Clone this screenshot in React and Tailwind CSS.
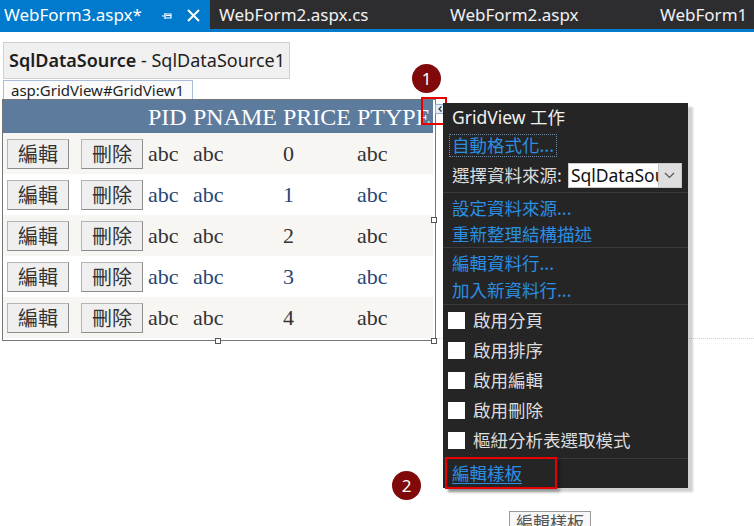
import React from 'react';

const ui = { fontFamily: '"Noto Sans", "Noto Sans CJK TC", sans-serif' };
const cjk = { fontFamily: '"Noto Sans CJK TC", "Noto Sans", sans-serif' };
const serif = { fontFamily: '"Liberation Serif", "Noto Sans CJK TC", serif' };

const rows = ['0', '1', '2', '3', '4'];

function PinIcon() {
  return (
    <svg width="11" height="10" viewBox="0 0 11 10" className="text-white">
      <path d="M0 5h3M3 2v6M3 3h6v4H3M4 4.5h5" stroke="currentColor" strokeWidth="1.2" fill="none" />
    </svg>
  );
}

function CloseIcon() {
  return (
    <svg width="13" height="13" viewBox="0 0 13 13">
      <path d="M1 1l11 11M12 1L1 12" stroke="white" strokeWidth="2" />
    </svg>
  );
}

function GridButton({ label }) {
  return (
    <div
      className="w-[62px] h-[30px] flex items-center justify-center bg-[#efefef] border border-[#b4b4b4] border-r-[#8c8c8c] border-b-[#8c8c8c] text-[20px] text-[#333]"
      style={cjk}
    >
      {label}
    </div>
  );
}

function Check({ label }) {
  return (
    <div className="h-[30px] flex items-center pl-[5px] gap-[8px]">
      <div className="w-[17px] h-[17px] bg-white" />
      <span className="text-[#dcdcdc]">{label}</span>
    </div>
  );
}

function Sep() {
  return <div className="h-px bg-[#3a3a3c]" />;
}

export default function App() {
  return (
    <div className="relative w-[754px] h-[526px] bg-white overflow-hidden" style={ui}>
      {/* 標籤列 */}
      <div className="h-[29px] bg-[#2d2d30] flex text-[17px] text-[#f1f1f1] overflow-hidden">
        <div className="w-[210px] shrink-0 bg-[#007acc] flex items-center pl-[4px] text-white">
          <span>WebForm3.aspx*</span>
          <span className="ml-[20px] mt-[2px]"><PinIcon /></span>
          <span className="ml-[14px] mt-[1px]"><CloseIcon /></span>
        </div>
        <div className="w-[231px] shrink-0 flex items-center pl-[9px]">WebForm2.aspx.cs</div>
        <div className="w-[210px] shrink-0 flex items-center pl-[9px]">WebForm2.aspx</div>
        <div className="shrink-0 flex items-center pl-[9px] whitespace-nowrap">WebForm1</div>
      </div>
      <div className="h-[3px] bg-[#007acc]" />

      {/* 設計畫面 */}
      <div className="pt-[10px]">
        <div className="ml-[3px] w-[287px] h-[37px] bg-[#f0f0f0] border border-[#cfcfcf] flex items-center pl-[5px] text-[18px] text-[#1e1e1e] whitespace-nowrap">
          <span className="font-semibold">SqlDataSource</span>
          <span>&nbsp;- SqlDataSource1</span>
        </div>
        <div className="ml-[3px] mt-px w-[190px] h-[20px] border border-b-0 border-[#a9bcd8] bg-[#fafafa] flex items-center pl-[7px] text-[15px] text-[#1e1e1e]">
          asp:GridView#GridView1
        </div>
        <div className="ml-[2px] -mt-px w-[434px] h-[242px] border border-[#767676]">
          <div className="w-[430px] h-[33px] bg-[#5d7b9d] flex items-center text-white text-[24px] whitespace-nowrap overflow-hidden" style={serif}>
            <div className="w-[145px] shrink-0" />
            <div className="w-[45px] shrink-0">PID</div>
            <div className="w-[90px] shrink-0">PNAME</div>
            <div className="w-[74px] shrink-0">PRICE</div>
            <div className="shrink-0">PTYPE</div>
          </div>
          {rows.map((n, i) => (
            <div
              key={n}
              className={
                'w-[430px] h-[41px] flex items-center text-[22px] ' +
                (i % 2 === 0 ? 'bg-[#f7f6f3] text-[#333333]' : 'bg-white text-[#284775]')
              }
              style={serif}
            >
              <div className="w-[73px] pl-[4px]"><GridButton label="編輯" /></div>
              <div className="w-[72px] pl-[5px]"><GridButton label="刪除" /></div>
              <div className="w-[45px]">abc</div>
              <div className="w-[90px]">abc</div>
              <div className="w-[74px]">{n}</div>
              <div>abc</div>
            </div>
          ))}
        </div>
      </div>

      {/* 選取控制點 */}
      <div className="absolute left-[431px] top-[217px] w-[6px] h-[6px] bg-white border border-[#555]" />
      <div className="absolute left-[215px] top-[338px] w-[6px] h-[6px] bg-white border border-[#555]" />
      <div className="absolute left-[431px] top-[338px] w-[6px] h-[6px] bg-white border border-[#555]" />
      <div className="absolute left-[437px] right-0 top-[338px] border-t border-dotted border-[#d0d0d0]" />

      {/* 智慧標籤 */}
      <div className="absolute left-[435px] top-[104px] w-[11px] h-[10px] bg-[#e4ecf7] border border-[#9aaecb] flex items-center justify-center">
        <svg width="5" height="6" viewBox="0 0 5 6">
          <path d="M3.5 0.5L1 3l2.5 2.5" stroke="#333" strokeWidth="1.2" fill="none" />
        </svg>
      </div>
      <div className="absolute left-[421px] top-[97px] w-[26px] h-[28px] border-2 border-[#e60000]" />
      <div className="absolute left-[412px] top-[64px] w-[29px] h-[29px] rounded-full bg-[#800a0a] text-white text-[17px] flex items-center justify-center">
        1
      </div>

      {/* GridView 工作 面板 */}
      <div
        className="absolute left-[443px] top-[103px] w-[245px] h-[385px] bg-[#252526] shadow-[5px_4px_2px_rgba(0,0,0,0.18)] text-[17.5px]"
        style={cjk}
      >
        <div className="h-[28px] flex items-center pl-[9px] text-[#f1f1f1]" style={ui}>
          GridView 工作
        </div>
        <div className="h-[28px] flex items-center pl-[6px]">
          <div className="h-[23px] px-[2px] flex items-center border border-dotted border-[#6f8aa8] text-[#2a8fe2]">
            自動格式化...
          </div>
        </div>
        <div className="h-[33px] flex items-center pl-[9px] text-[#dcdcdc]">
          <span>選擇資料來源:</span>
          <div className="ml-[6px] w-[114px] h-[25px] bg-white border border-[#c8c8c8] flex overflow-hidden">
            <div className="flex-1 overflow-hidden whitespace-nowrap text-[#111] pl-[2px] leading-[23px]" style={ui}>
              SqlDataSource1
            </div>
            <div className="w-[23px] shrink-0 bg-[#dedede] border-l border-[#c8c8c8] flex items-center justify-center">
              <svg width="11" height="7" viewBox="0 0 11 7">
                <path d="M1 1l4.5 4.5L10 1" stroke="#555" strokeWidth="1.2" fill="none" />
              </svg>
            </div>
          </div>
        </div>
        <Sep />
        <div className="pt-[2px] text-[#2a8fe2]">
          <div className="h-[26px] flex items-center pl-[9px]">設定資料來源...</div>
          <div className="h-[26px] flex items-center pl-[9px]">重新整理結構描述</div>
        </div>
        <Sep />
        <div className="pt-[2px] text-[#2a8fe2]">
          <div className="h-[27px] flex items-center pl-[9px]">編輯資料行...</div>
          <div className="h-[27px] flex items-center pl-[9px]">加入新資料行...</div>
        </div>
        <Sep />
        <div className="pb-[3px]">
          <Check label="啟用分頁" />
          <Check label="啟用排序" />
          <Check label="啟用編輯" />
          <Check label="啟用刪除" />
          <Check label="樞紐分析表選取模式" />
        </div>
        <Sep />
        <div className="h-[29px] flex items-center pl-[9px] text-[#2a8fe2] underline underline-offset-[3px]">
          編輯樣板
        </div>
        <div className="absolute left-[2px] top-[354px] w-[112px] h-[32px] border-2 border-[#e60000] shadow-[3px_3px_3px_rgba(0,0,0,0.3)]" />
      </div>

      <div className="absolute left-[392px] top-[471px] w-[29px] h-[29px] rounded-full bg-[#800a0a] text-white text-[17px] flex items-center justify-center">
        2
      </div>

      {/* 提示 */}
      <div
        className="absolute left-[509px] top-[511px] w-[82px] h-[22px] border border-[#9a9a9a] bg-[#f7f7f7] pl-[6px] text-[17px] leading-[20px] text-[#555]"
        style={cjk}
      >
        編輯樣板
      </div>
    </div>
  );
}
